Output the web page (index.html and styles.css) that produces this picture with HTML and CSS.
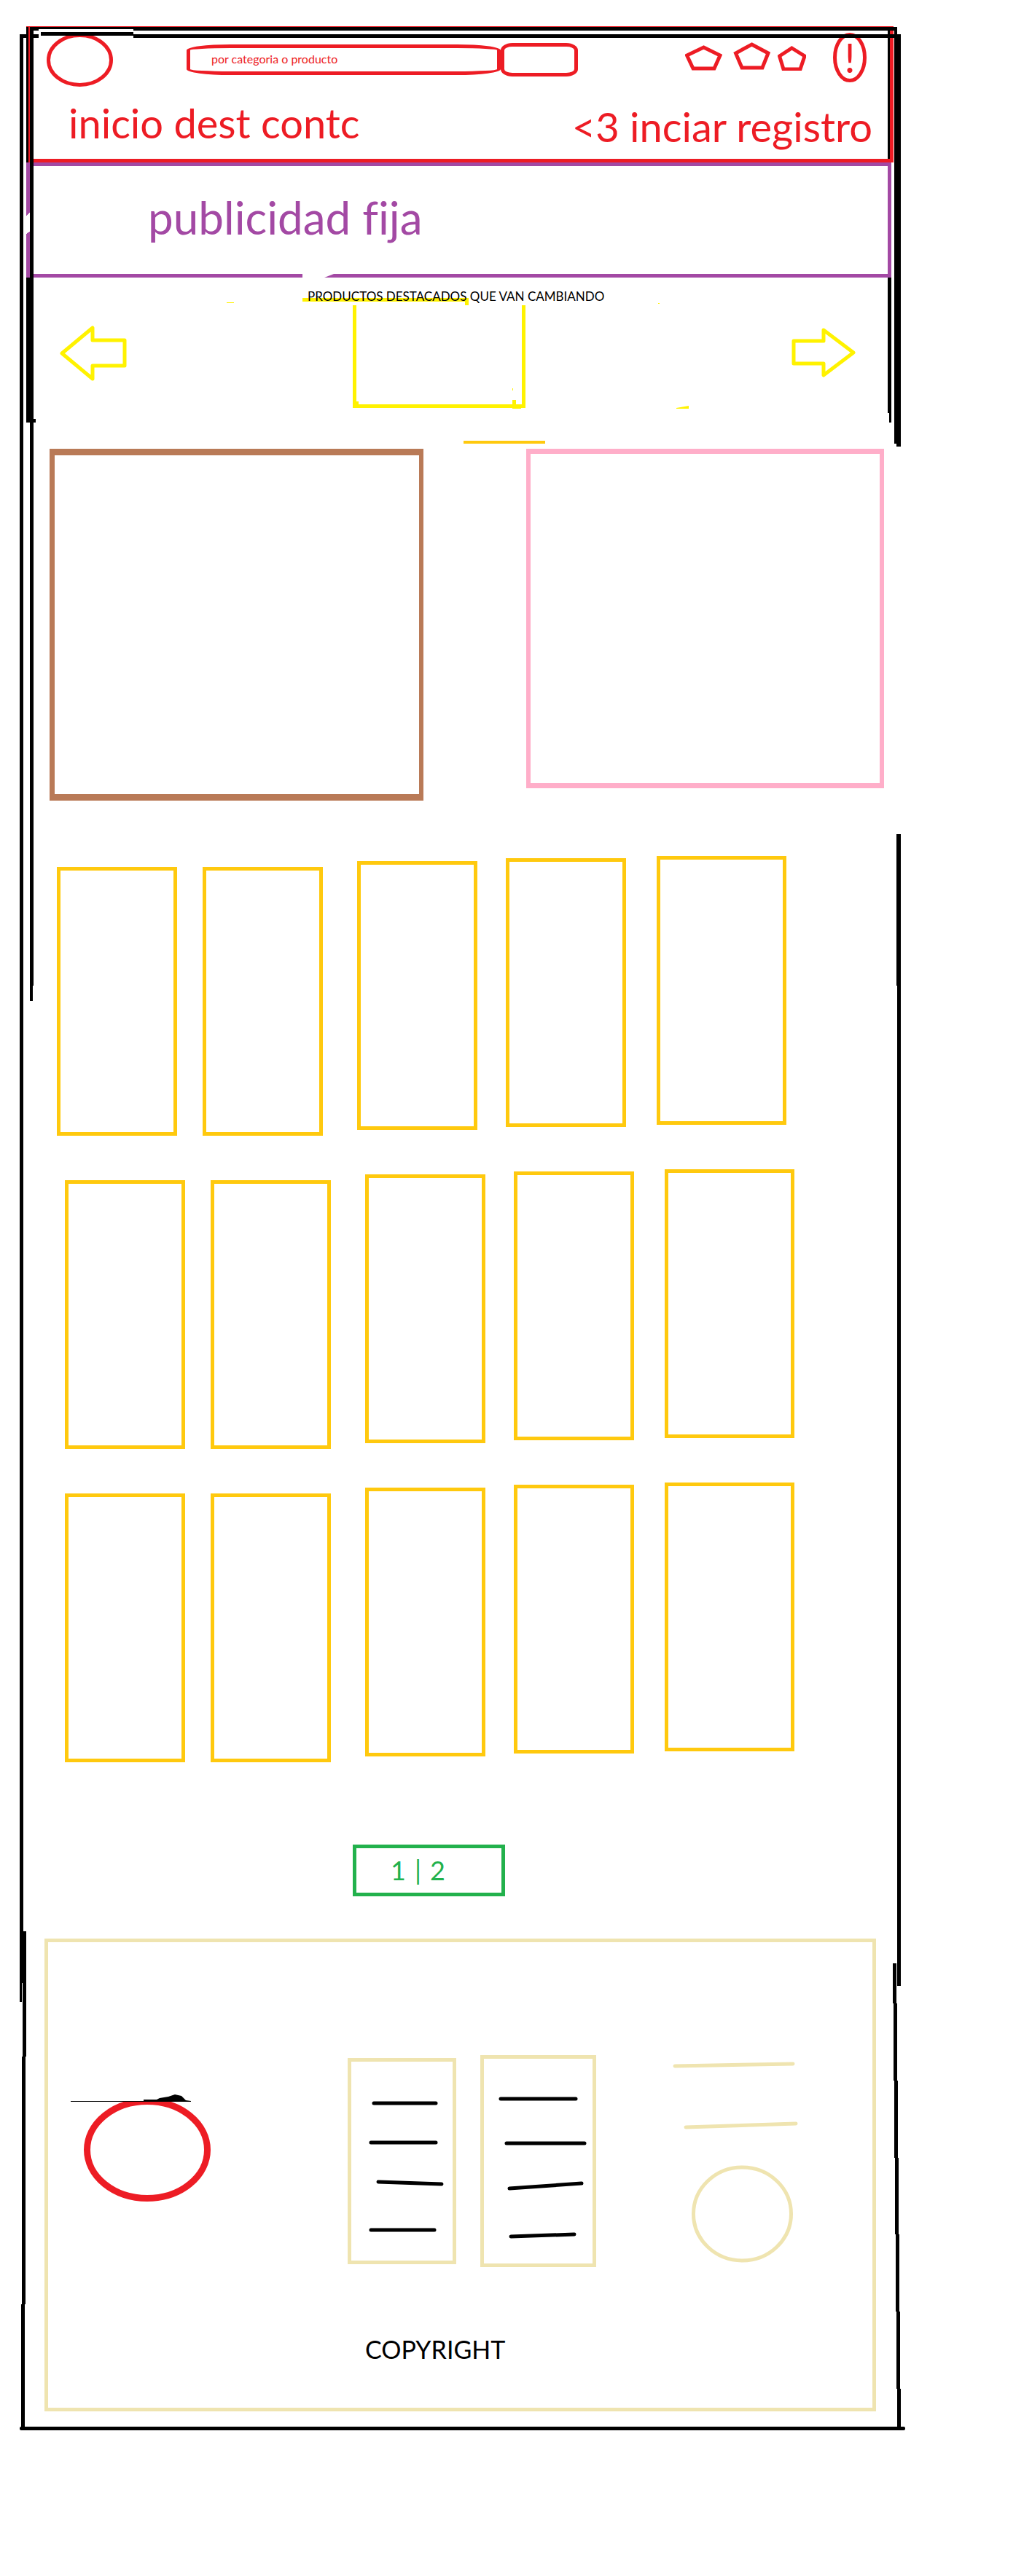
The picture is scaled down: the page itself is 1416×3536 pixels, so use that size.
FILE: index.html
```html
<!DOCTYPE html>
<html lang="es">
<head>
<meta charset="utf-8">
<meta name="viewport" content="width=device-width, initial-scale=1">
<title>Tienda - boceto</title>
<link rel="stylesheet" href="styles.css">
</head>
<body>
<div class="page">
  <header class="header">
    <div class="topbar">
      <a class="logo" href="#" aria-label="Logo">
        <svg width="91" height="71" viewBox="0 0 91 71"><ellipse cx="45.5" cy="34.5" rx="43" ry="34"/></svg>
      </a>
      <form class="search">
        <input class="search-input" type="search" aria-label="Buscar" placeholder="por categoria o producto">
        <button class="search-button" type="submit" aria-label="Buscar"></button>
      </form>
      <div class="icons">
        <a href="#" aria-label="Red social 1"><svg width="51" height="36" viewBox="0 0 51 36"><path d="M25.5 4 48 15 40 33H11L2.500 15Z"/></svg></a>
        <a href="#" aria-label="Red social 2"><svg class="raised" width="54" height="36" viewBox="0 0 54 36"><path d="M29.500 0 52 12 44 32H16L7.500 12Z"/></svg></a>
        <a href="#" aria-label="Red social 3"><svg width="39" height="36" viewBox="0 0 39 36"><path d="M19.500 5 37 16 31 34H8L2.500 16Z"/></svg></a>
        <a class="alert" href="#" aria-label="Avisos">
          <svg width="46" height="68" viewBox="0 0 46 68"><ellipse cx="23" cy="34" rx="20.500" ry="31.500"/></svg>
          <span class="alert-mark">!</span>
        </a>
      </div>
    </div>
    <div class="menu">
      <nav class="menu-main"><a href="#">inicio</a> <a href="#">dest</a> <a href="#">contc</a></nav>
      <nav class="menu-user"><a href="#">&lt;3</a> <a href="#">inciar</a> <a href="#">registro</a></nav>
    </div>
  </header>

  <section class="banner">publicidad fija</section>

  <section class="featured">
    <h2 class="featured-title">PRODUCTOS DESTACADOS QUE VAN CAMBIANDO</h2>
    <div class="carousel">
      <button class="arrow" type="button" aria-label="Anterior">
        <svg width="92" height="76" viewBox="0 0 92 76"><path d="M3 38 45 3V20H89V55H45V73Z"/></svg>
      </button>
      <div class="slide">
        <svg class="strokes" width="640" height="190" viewBox="0 0 640 190" aria-hidden="true">
          <path fill="#fff" d="M104 0H147L134 5H104Z"/>
          <path d="M104 33H332V43H327V38H104ZM0 39H10V40H0ZM592 40H594V41H592ZM178 175H181V179H178ZM392 173H397V179H404V185H392ZM392 157H393V160H392ZM617 184 634 181V185H617Z"/>
        </svg>
      </div>
      <button class="arrow" type="button" aria-label="Siguiente">
        <svg width="88" height="70" viewBox="0 0 88 70"><path d="M3 18H44V3L85 34 44 65V49H3Z"/></svg>
      </button>
    </div>
    <hr class="divider">
  </section>

  <section class="promos">
    <div class="promo promo-brown"></div>
    <div class="promo promo-pink"></div>
  </section>

  <main class="products">
    <div class="product-row">
      <article class="card"></article><article class="card"></article><article class="card"></article><article class="card"></article><article class="card"></article>
    </div>
    <div class="product-row shifted">
      <article class="card"></article><article class="card"></article><article class="card"></article><article class="card"></article><article class="card"></article>
    </div>
    <div class="product-row shifted">
      <article class="card"></article><article class="card"></article><article class="card"></article><article class="card"></article><article class="card"></article>
    </div>
  </main>

  <nav class="pager" aria-label="Paginas"><a href="#">1</a><span>|</span><a href="#">2</a></nav>

  <footer class="footer">
    <div class="footer-grid">
      <svg class="footer-logo" width="192" height="183" viewBox="0 0 192 183" aria-hidden="true">
        <clipPath id="below-line"><path d="M0 9H192V183H0Z"/></clipPath>
        <ellipse cx="105" cy="76" rx="82.500" ry="66.500" fill="none" stroke="#ed1c24" stroke-width="9" clip-path="url(#below-line)"/>
        <path fill="#000" d="M0 9H100V7H118L122 5 134 3 143 0 152 2 158 8 165 9V10H0Z"/>
      </svg>
      <div class="link-box">
        <svg width="139" height="273" viewBox="0 0 139 273" aria-hidden="true"><path d="M31 57H116M27 111H116M37 165 124 168M27 231H114"/></svg>
      </div>
      <div class="link-box">
        <svg width="149" height="281" viewBox="0 0 149 281" aria-hidden="true"><path d="M23 55H126M31 116H138M35 178 134 171M37 244 124 241"/></svg>
      </div>
      <svg class="contact" width="172" height="281" viewBox="0 0 172 281" aria-hidden="true">
        <path d="M3 10 165 7M18 94 169 89"/>
        <ellipse cx="95.500" cy="213" rx="67" ry="64"/>
      </svg>
    </div>
    <p class="copyright">COPYRIGHT</p>
  </footer>

  <!-- hand-drawn outline around the whole sheet -->
  <div class="edge edge-header"></div>
  <div class="edge edge-top"></div>
  <div class="edge edge-bottom"></div>
  <svg class="retrace" width="156" height="12" viewBox="0 0 156 12" aria-hidden="true"><path fill="#fff" d="M26 0H156V4H26Z"/><path d="M29 4H156V9H29ZM0 7H26V12H0Z"/></svg>
  <svg class="rail rail-left" viewBox="0 0 22 3300" preserveAspectRatio="none" aria-hidden="true">
    <path d="M0 11H5V2686H3V2712H0ZM4 2615H9V2787H8V3127H7V3298H2V3127H3V2787H4ZM14 1H19V1317H18V1338H14ZM9 1H14V187H9ZM9 345H14V539H22V544H9Z"/>
    <path fill="#ed1c24" d="M12 0H14V187H12Z"/>
    <path fill="#fff" d="M9 260 14 256V282L9 285Z"/>
  </svg>
  <svg class="rail rail-right" viewBox="0 0 18 3300" preserveAspectRatio="none" aria-hidden="true">
    <path d="M0 6H3V182H0ZM9 1H13V11H18V577H12V573H9ZM0 345H5V544H2V531H0ZM12 1109H18V2690H13V1317H12ZM7 2659H12V2714H13V2820H14V2926H15V3031H16V3137H17V3243H18V3297H13V3243H12V3137H11V3031H10V2926H9V2820H8V2714H7Z"/>
  </svg>
</div>
</body>
</html>
```
FILE: styles.css
```css
:root {
  --red: #ed1c24;
  --purple: #a349a4;
  --yellow: #fff200;
  --gold: #ffc90e;
  --sand: #efe4b0;
  --green: #22b14c;
}

* { box-sizing: border-box; }

body {
  margin: 0;
  padding: 36px 180px 200px 27px;
  background: #fff;
  color: #000;
  font-family: Lato, "Open Sans", sans-serif;
  font-variant-ligatures: none;
}

a { color: inherit; text-decoration: none; }
svg { display: block; }

.page { position: relative; padding-bottom: 26px; }

/* header */
.header {
  margin: 0 10px 0 9px;
  border: 5px solid var(--red);
  border-top-width: 1px;
  border-left: 0;
  color: var(--red);
}
.header svg { fill: none; stroke: var(--red); stroke-width: 5; }

.topbar {
  display: flex;
  align-items: center;
  height: 82px;
  padding: 8px 32px 0 28px;
}
.logo { align-self: flex-end; }

.search { display: flex; align-items: center; margin-left: 101px; }
.search-input {
  width: 431px;
  height: 42px;
  padding: 0 29px 4px;
  border: 5px solid var(--red);
  border-radius: 60px / 8px;
  background: none;
  color: var(--red);
  font: 16px Lato, sans-serif;
  outline: 0;
}
.search-input::placeholder { color: var(--red); opacity: 1; }
.search-button {
  width: 106px;
  height: 46px;
  border: 5px solid var(--red);
  border-radius: 16px / 10px;
  background: none;
}

.icons {
  display: flex;
  align-items: center;
  align-self: flex-start;
  gap: 11px;
  margin-left: auto;
}
.raised { overflow: visible; }
.alert { position: relative; margin-left: 26px; }
.alert-mark {
  position: absolute;
  inset: 0;
  font-size: 56px;
  line-height: 68px;
  text-align: center;
}

.menu {
  display: flex;
  align-items: center;
  justify-content: space-between;
  height: 99px;
  padding: 0 24px 0 58px;
  font-size: 56px;
  line-height: 64px;
}
.menu-user { padding-top: 10px; }

/* fixed advertising */
.banner {
  margin: 0 13px 0 9px;
  padding: 38px 0 46px 162px;
  border: 5px solid var(--purple);
  color: var(--purple);
  font-size: 62px;
  line-height: 64px;
}

/* rotating products */
.featured { padding: 14px 62px 0 55px; }
.featured-title {
  position: relative;
  z-index: 1;
  margin: 0 0 0 340px;
  font-size: 17px;
  font-weight: 400;
  line-height: 24px;
  white-space: nowrap;
}
.carousel {
  display: grid;
  grid-template-columns: 92px 310fr 237px 365fr 88px;
  align-items: center;
}
.arrow { padding: 0 0 10px; border: 0; background: none; }
.arrow svg { fill: none; stroke: var(--yellow); stroke-width: 5; stroke-linejoin: round; }
.arrow:last-child { grid-column: 5; }
.slide {
  position: relative;
  grid-column: 3;
  height: 141px;
  border: 5px solid var(--yellow);
  border-top: 0;
}
.strokes { position: absolute; top: -43px; left: -178px; fill: var(--yellow); }
.divider {
  width: 112px;
  height: 4px;
  margin: 45px 0 0 554px;
  border: 0;
  background: var(--gold);
}

/* promos */
.promos {
  display: grid;
  grid-template-columns: 513fr 491fr;
  align-items: start;
  gap: 141px;
  padding: 7px 23px 0 41px;
}
.promo-brown { height: 483px; border: solid #b97a57; border-width: 9px 6px 9px 7px; }
.promo-pink { height: 466px; border: solid #ffaec9; border-width: 7px 6px; }

/* product grid */
.products {
  display: flex;
  flex-direction: column;
  gap: 46px;
  padding-top: 76px;
}
.product-row {
  display: grid;
  grid-template-columns: 165fr 35fr 165fr 47fr 165fr 39fr 165fr 42fr 178fr;
  align-items: start;
  padding: 0 157px 0 51px;
}
.product-row.shifted { padding: 0 146px 0 62px; }
.card { height: 369px; margin-top: 15px; border: 5px solid var(--gold); }
.card:nth-child(2) { grid-column: 3; }
.card:nth-child(3) { grid-column: 5; margin-top: 7px; }
.card:nth-child(4) { grid-column: 7; margin-top: 3px; }
.card:nth-child(5) { grid-column: 9; margin-top: 0; }

/* pagination */
.pager {
  display: flex;
  gap: 12px;
  width: 209px;
  margin: 113px 0 58px 457px;
  padding: 0 47px;
  border: 5px solid var(--green);
  color: var(--green);
  font-size: 36px;
  line-height: 61px;
}

/* footer */
.footer {
  margin: 0 34px;
  padding: 155px 102px 60px 31px;
  border: 5px solid var(--sand);
}
.footer-grid {
  display: grid;
  grid-template-columns: 192px 188fr 149px 33fr 159px 105fr 172px;
  align-items: center;
}
.link-box { grid-column: 3; border: 5px solid var(--sand); }
.link-box + .link-box { grid-column: 5; }
.link-box svg { fill: none; stroke: #000; stroke-width: 5; stroke-linecap: round; }
.contact { grid-column: 7; fill: none; stroke: var(--sand); stroke-width: 5; stroke-linecap: round; }
.copyright {
  margin: 93px 0 0 404px;
  font-size: 34px;
  line-height: 40px;
}

/* sheet outline, drawn over the content */
.edge { position: absolute; height: 5px; background: #000; }
.edge-header { top: 1px; left: 9px; right: 5px; }
.edge-top { top: 11px; left: 156px; right: 0; }
.edge-bottom { bottom: 0; left: 0; right: -6px; border-radius: 2px; }
.retrace { position: absolute; top: 4px; left: 0; }
.rail { position: absolute; top: 0; height: 100%; shape-rendering: crispEdges; }
.rail-left { left: 0; width: 22px; }
.rail-right { right: 0; width: 18px; }
```
